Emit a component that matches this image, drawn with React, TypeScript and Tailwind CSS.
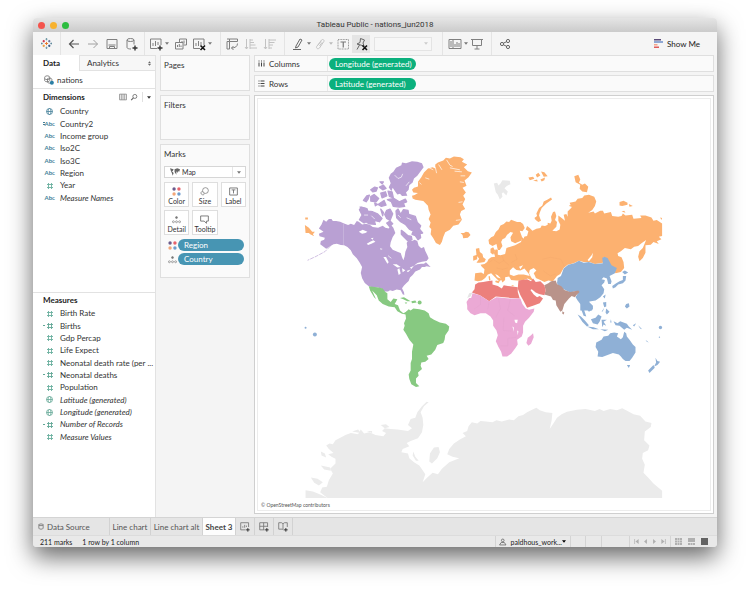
import React from "react";

type IconProps = { children: React.ReactNode; className?: string };

function Icon({ children, className = "h-[14px] w-[14px]" }: IconProps) {
  return (
    <svg viewBox="0 0 14 14" fill="none" stroke="currentColor" strokeWidth="1" className={className} aria-hidden="true">
      {children}
    </svg>
  );
}

function Tool({ label, children, className = "text-[#808080]" }: { label: string; children: React.ReactNode; className?: string }) {
  return (
    <button type="button" aria-label={label} className={`flex h-[18px] w-[18px] shrink-0 items-center justify-center ${className}`}>
      <Icon>{children}</Icon>
    </button>
  );
}

function Caret({ className = "text-[#777]" }: { className?: string }) {
  return (
    <svg viewBox="0 0 6 4" className={`h-[3px] w-[4px] shrink-0 ${className}`} aria-hidden="true">
      <path d="M0 0H6L3 4Z" fill="currentColor" />
    </svg>
  );
}

function Sep() {
  return <span className="h-full w-px shrink-0 bg-[#e4e4e4]" />;
}

const plus = <path d="M11 8.5V13.5M8.5 11H13.5" stroke="#333" strokeWidth="1.4" />;
const cross = <path d="M8.5 8.5L13 13M13 8.5L8.5 13" stroke="#111" strokeWidth="1.6" />;

function TableauLogo() {
  return (
    <svg viewBox="0 0 14 14" className="h-[11px] w-[11px]" fill="none" strokeWidth="1.2" aria-hidden="true">
      <path d="M7 5V9M5 7H9" stroke="#e8762c" />
      <path d="M3.5 2.5V5.5M2 4H5" stroke="#c72037" />
      <path d="M10.5 2.5V5.5M9 4H12" stroke="#5b6591" />
      <path d="M3.5 8.5V11.5M2 10H5" stroke="#eb912c" />
      <path d="M10.5 8.5V11.5M9 10H12" stroke="#1f457e" />
      <path d="M7 0V3M5.7 1.5H8.3" stroke="#7099a6" />
      <path d="M7 11V14M5.7 12.5H8.3" stroke="#7099a6" />
      <path d="M1 5.8V8.2M0 7H2M13 5.8V8.2M12 7H14" stroke="#5b879b" />
    </svg>
  );
}

function Toolbar() {
  return (
    <div className="flex h-[23px] shrink-0 items-center bg-[#f5f5f5]" role="toolbar" aria-label="Main toolbar">
      <button type="button" aria-label="Start page" className="flex w-[27px] shrink-0 items-center justify-center"><TableauLogo /></button>
      <Sep />
      <div className="ml-1 mr-1 flex gap-px">
        <Tool label="Undo" className="text-[#555]"><path d="M12 7H2.5M6.5 3L2.5 7L6.5 11" strokeWidth="1.2" /></Tool>
        <Tool label="Redo" className="text-[#a0a0a0]"><path d="M2 7H11.5M7.5 3L11.5 7L7.5 11" /></Tool>
        <Tool label="Save"><path d="M2 2.500H12V11.500H2ZM4.500 11.500V9.500H9.500V11.500M3.500 8H10.500" /></Tool>
        <Tool label="New data source">
          <ellipse cx="6.500" cy="3" rx="3.500" ry="1.500" />
          <path d="M3 3V10.500C3 11.500 5 12 7 12M10 3V7.500" />{plus}
        </Tool>
      </div>
      <Sep />
      <div className="ml-[2px] mr-1 flex items-center">
        <Tool label="New worksheet"><path d="M8 11.500H1.500V2H12V8M4 9V6M6.500 9V4M9 8V5" />{plus}</Tool>
        <Caret />
        <span className="w-[3px]" />
        <Tool label="Duplicate sheet"><path d="M5.500 5.500V2H12.500V8H9.500M1.500 5.500H9V12H1.500ZM3.500 10V8M5.300 10V7M7 10V8.500M8 4V5M10 3.500V6.500" /></Tool>
        <Tool label="Clear sheet"><path d="M8 11.500H1.500V2H12V8M4 9V6M6.500 9V4M9 8V5" />{cross}</Tool>
        <Caret />
        <span className="w-[4px]" />
      </div>
      <Sep />
      <div className="ml-[2px] mr-1 flex gap-px">
        <Tool label="Swap rows and columns"><path d="M4.500 2H12.500V4.500H4.500ZM2 4.500H4.500V12H2ZM2 2H4.500M12.500 6.500C12.500 9.500 10 11 6.500 11M8.500 9L6.500 11L8.500 13" /></Tool>
        <Tool label="Sort ascending" className="text-[#c2c2c2]"><path d="M2.500 2V12M1 10L2.500 12L4 10M6 3H9M6 5.500H10M6 8H11.500M6 11H13M6 2V12" /></Tool>
        <Tool label="Sort descending" className="text-[#c2c2c2]"><path d="M2.500 2V12M1 10L2.500 12L4 10M6 3H13M6 5.500H11.500M6 8H10M6 11H9M6 2V12" /></Tool>
      </div>
      <span className="w-px" />
      <Sep />
      <div className="ml-1 flex items-center">
        <Tool label="Highlight" className="text-[#666]"><path d="M5 9L9 2L11 3L7 10L4.500 11ZM2 12.500H10" /></Tool>
        <Caret />
        <Tool label="Group members" className="text-[#c4c4c4]"><path d="M5 8L8.500 3C10 1.500 12 3.500 10.500 5L6.500 11C4.500 13 2.500 10.500 4 9L8 4.500M6.500 9L9 5.500" /></Tool>
        <Caret className="text-[#bbb]" />
        <span className="w-px" />
        <Tool label="Show mark labels" className="text-[#999]"><path d="M2 2.500H12.500V12H2Z" strokeDasharray="1 .6" /><path d="M4.500 5H10M7.250 5V10.500" stroke="#777" strokeWidth="1.2" /></Tool>
        <button type="button" aria-label="Fix axes" aria-pressed="true" className="flex h-[18px] w-[18px] items-center justify-center bg-[#e5e5e5] text-[#666]">
          <Icon><path d="M6.500 1.500L10.500 3L9 6L10 9L3 7L6 5.500ZM5.500 8L3 12.500" />{cross}</Icon>
        </button>
      </div>
      <select aria-label="Fit" disabled className="ml-1 h-[14px] w-[58px] appearance-none border border-[#e4e4e4] bg-[#f7f7f7]" />
      <span className="-ml-2 mr-[14px] flex"><Caret className="text-[#ccc]" /></span>
      <Sep />
      <div className="ml-[3px] mr-[5px] flex items-center">
        <Tool label="Show or hide cards"><path d="M1 2.500H13V11.500H1ZM5 2.500V11.500M2 5H4M2 7H4M2 9H4M7 10V7M9 10V5M11 10V6" /></Tool>
        <Caret />
        <Tool label="Presentation mode"><path d="M1 2.500H13M2.500 2.500V8.500H11.500V2.500M7 8.500V12M4.500 12H9.500" /></Tool>
      </div>
      <Sep />
      <div className="ml-1"><Tool label="Share" className="text-[#666]"><circle cx="4" cy="7" r="1.600" /><circle cx="10" cy="4" r="1.600" /><circle cx="10" cy="10" r="1.600" /><path d="M5.400 6.200L8.600 4.700M5.400 7.800L8.600 9.300" /></Tool></div>
      <span className="flex-1" />
      <button type="button" className="mr-[17px] flex items-center gap-[4px] text-[#222]">
        <svg viewBox="0 0 9 9" className="h-[9px] w-[9px]" aria-hidden="true">
          <path d="M0 0H7V1.500H0Z" fill="#5a4a78" /><path d="M0 2H9V4H0Z" fill="#8fa8d4" /><path d="M0 5H3.500V6.500H0Z" fill="#f4a58c" /><path d="M0 7.500H5V9H0Z" fill="#e05a5a" />
        </svg>
        Show Me
      </button>
    </div>
  );
}

type Kind = "globe" | "abc" | "=abc" | "num" | "=num";
type Field = { name: string; kind: Kind; italic?: boolean };

const dimensions: Field[] = [
  { name: "Country", kind: "globe" },
  { name: "Country2", kind: "=abc" },
  { name: "Income group", kind: "abc" },
  { name: "Iso2C", kind: "abc" },
  { name: "Iso3C", kind: "abc" },
  { name: "Region", kind: "abc" },
  { name: "Year", kind: "num" },
  { name: "Measure Names", kind: "abc", italic: true },
];

const measures: Field[] = [
  { name: "Birth Rate", kind: "num" },
  { name: "Births", kind: "=num" },
  { name: "Gdp Percap", kind: "num" },
  { name: "Life Expect", kind: "num" },
  { name: "Neonatal death rate (per ...", kind: "num" },
  { name: "Neonatal deaths", kind: "=num" },
  { name: "Population", kind: "num" },
  { name: "Latitude (generated)", kind: "globe", italic: true },
  { name: "Longitude (generated)", kind: "globe", italic: true },
  { name: "Number of Records", kind: "=num", italic: true },
  { name: "Measure Values", kind: "num", italic: true },
];

function FieldIcon({ kind }: { kind: Kind }) {
  if (kind === "abc" || kind === "=abc") {
    return (
      <span className="flex items-center text-[6px] font-bold leading-none">
        {kind === "=abc" && <svg viewBox="0 0 2 3" className="h-[3px] w-[2px]" aria-hidden="true"><path d="M0 0H2V1H0ZM0 2H2V3H0Z" fill="currentColor" /></svg>}
        Abc
      </span>
    );
  }
  if (kind === "globe") {
    return (
      <Icon className="mr-[2px] h-[7px] w-[7px]">
        <circle cx="7" cy="7" r="6" strokeWidth="1.6" /><ellipse cx="7" cy="7" rx="2.800" ry="6" strokeWidth="1.400" /><path d="M1 7H13" strokeWidth="1.600" />
      </Icon>
    );
  }
  return (
    <svg viewBox="0 0 10 7" className="mr-[2px] h-[7px] w-[10px]" fill="none" stroke="currentColor" aria-hidden="true">
      {kind === "=num" && <path d="M0 3.500H2" />}
      <path d="M5.500 1V7M8.500 1V7M4 2.500H10M4 5.500H10" strokeWidth=".9" />
    </svg>
  );
}

function FieldList({ fields, className, tone }: { fields: Field[]; className: string; tone: string }) {
  return (
    <ul className={`flex flex-col ${className}`}>
      {fields.map((f) => (
        <li key={f.name} className="flex min-h-0 flex-1 items-center">
          <span className={`flex w-[22px] shrink-0 justify-end ${f.kind === "num" ? "text-[#6bb09f]" : tone}`}><FieldIcon kind={f.kind} /></span>
          <span className={`ml-[5px] whitespace-nowrap leading-none ${f.italic ? "italic" : ""}`}>{f.name}</span>
        </li>
      ))}
    </ul>
  );
}

function DataPane() {
  return (
    <aside className="flex w-[123px] shrink-0 flex-col border-r border-[#e2e2e2] bg-white">
      <div className="flex h-[16px] shrink-0" role="tablist">
        <button type="button" role="tab" aria-selected="true" className="w-[46px] pl-[10px] text-left font-bold text-[#222]">Data</button>
        <button type="button" role="tab" aria-selected="false" className="flex flex-1 items-center justify-between border-b border-l border-t border-[#e2e2e2] bg-[#f7f7f7] pl-[7px] pr-1">
          Analytics
          <svg viewBox="0 0 4 6" className="h-[5px] w-[3px]" aria-hidden="true"><path d="M0 2.500L2 0L4 2.500ZM0 3.500L2 6L4 3.500Z" fill="#666" /></svg>
        </button>
      </div>
      <button type="button" className="flex h-[18px] shrink-0 items-center gap-[3px] border-b border-[#e2e2e2] pl-[11px]">
        <Icon className="h-[10px] w-[10px] text-[#777]">
          <path d="M1 3C1 .5 8 .5 8 3V8C8 10 1 10 1 8ZM1 5C2 7 7 7 8 5M5 5V10C5 12 11 12 11 10V6C11 4 6 4 5 5" strokeWidth="1.200" />
          <circle cx="11" cy="11" r="2.800" fill="#2a7fa5" stroke="none" />
        </Icon>
        nations
      </button>
      <div className="flex h-[16px] shrink-0 items-center pl-[10px] pr-1">
        <h2 className="flex-1 font-bold text-[#222]">Dimensions</h2>
        <button type="button" aria-label="View data" className="mr-[3px] text-[#888]"><Icon className="h-[8px] w-[8px]"><path d="M1 2H13V12H1ZM4 2V12M7 2V12M10 2V12" strokeWidth="1.400" /></Icon></button>
        <button type="button" aria-label="Find field" className="mr-[4px] text-[#666]"><Icon className="h-[8px] w-[8px]"><circle cx="8.500" cy="6" r="3.500" strokeWidth="1.400" /><path d="M6 8.500L2 12.500" strokeWidth="2" /></Icon></button>
        <span className="mr-[4px] h-[10px] w-px bg-[#e0e0e0]" />
        <button type="button" aria-label="Dimension options"><Caret className="text-[#333]" /></button>
      </div>
      <FieldList fields={dimensions} tone="text-[#437f98]" className="h-[99px] shrink-0" />
      <div className="mt-[88px] flex h-[15px] shrink-0 items-center border-t border-[#e2e2e2] pl-[10px]">
        <h2 className="font-bold text-[#222]">Measures</h2>
      </div>
      <FieldList fields={measures} tone="text-[#62a796]" className="h-[136px] shrink-0" />
    </aside>
  );
}

function ColorDots() {
  return (
    <svg viewBox="0 0 10 10" className="h-[9px] w-[9px]" aria-hidden="true">
      <circle cx="2.300" cy="2.300" r="1.900" fill="#6b5b8c" /><circle cx="7.700" cy="2.300" r="1.900" fill="#e8636b" /><circle cx="2.300" cy="7.700" r="1.900" fill="#f2a679" /><circle cx="7.700" cy="7.700" r="1.900" fill="#6f9ccd" />
    </svg>
  );
}

function DetailDots() {
  return (
    <Icon className="h-[9px] w-[9px] text-[#777]">
      <circle cx="7" cy="4" r="1.500" fill="currentColor" /><circle cx="2.200" cy="10.500" r="1.500" /><circle cx="7" cy="10.500" r="1.500" /><circle cx="11.800" cy="10.500" r="1.500" />
    </Icon>
  );
}

function MarkButton({ label, children }: { label: string; children: React.ReactNode }) {
  return (
    <button type="button" className="flex h-[25px] flex-col items-center justify-between border border-[#dedede] bg-white pb-px pt-[4px] text-[7px] text-[#333]">
      {children}
      <span className="leading-[8px]">{label}</span>
    </button>
  );
}

function Cards() {
  return (
    <div className="flex w-[90px] shrink-0 flex-col gap-[4px]">
      <section className="h-[36px] border border-[#dfdfdf] bg-[#fafafa] px-[3px] py-[4px]"><h2 className="leading-[10px]">Pages</h2></section>
      <section className="h-[45px] border border-[#dfdfdf] bg-[#fafafa] px-[3px] py-[4px]"><h2 className="leading-[10px]">Filters</h2></section>
      <section className="h-[134px] border border-[#dfdfdf] bg-[#fafafa] px-[3px] py-[4px]">
        <h2 className="leading-[10px]">Marks</h2>
        <div className="mt-[7px] flex h-[12px] items-center border border-[#d6d6d6] bg-white pl-[5px] pr-[4px]">
          <svg viewBox="0 0 11 8" className="h-[8px] w-[10px]" fill="#666" aria-hidden="true"><path d="M0 0L4 1L3 3L2 3L4 5L3 8L2 5L1 3ZM5 1L8 0L11 1L10 4L9 3L8 5L7 3L7 7L5 4Z" /></svg>
          <select aria-label="Mark type" className="h-[10px] min-w-0 flex-1 appearance-none pl-[2px] text-[7px] leading-[10px]"><option>Map</option></select>
          <span className="mr-[4px] h-full w-px bg-[#e6e6e6]" />
          <Caret />
        </div>
        <div className="mt-[4px] grid grid-cols-3 gap-[3px]">
          <MarkButton label="Color"><ColorDots /></MarkButton>
          <MarkButton label="Size"><Icon className="h-[9px] w-[9px] text-[#666]"><circle cx="8.500" cy="5.500" r="4.500" /><path d="M4 7C1.500 7 1 9 2 11C4 13 7 12.500 6.500 10" /></Icon></MarkButton>
          <MarkButton label="Label"><Icon className="h-[9px] w-[9px] text-[#666]"><path d="M1 1.500H13V12.500H1ZM4 4.500H10M7 4.500V10" strokeWidth="1.300" /></Icon></MarkButton>
          <MarkButton label="Detail"><DetailDots /></MarkButton>
          <MarkButton label="Tooltip"><Icon className="h-[9px] w-[9px] text-[#666]"><path d="M1 1.500H13V9.500H10V13L6.500 9.500H1Z" strokeWidth="1.300" /></Icon></MarkButton>
        </div>
        <ul className="mt-[4px] flex flex-col gap-[2px] pl-[4px] pr-[2px]">
          <li className="flex items-center gap-px"><ColorDots /><button type="button" className="h-[12px] flex-1 rounded-full bg-[#4795b3] pl-[6px] text-left text-white">Region</button></li>
          <li className="flex items-center gap-px"><DetailDots /><button type="button" className="h-[12px] flex-1 rounded-full bg-[#4795b3] pl-[6px] text-left text-white">Country</button></li>
        </ul>
      </section>
    </div>
  );
}

function Shelf({ name, pill, vertical }: { name: string; pill: string; vertical?: boolean }) {
  return (
    <section className="flex h-[17px] shrink-0 items-center border border-[#dfdfdf] bg-[#fafafa]">
      <div className="flex h-full w-[73px] items-center gap-[4px] border-r border-[#e8e8e8] pl-[3px]">
        <Icon className="h-[7px] w-[7px] text-[#444]">
          {vertical ? <path d="M2 1V3M2 5V13M7 1V3M7 5V13M12 1V3M12 5V13" strokeWidth="2" /> : <path d="M1 2H3M5 2H13M1 7H3M5 7H13M1 12H3M5 12H13" strokeWidth="2" />}
        </Icon>
        <h2>{name}</h2>
      </div>
      <button type="button" className="ml-px h-[12px] w-[87px] rounded-full bg-[#0bb07d] pl-[6px] text-left text-white">{pill}</button>
    </section>
  );
}

function WorldMap() {
  return (
    <svg viewBox="257 98 453 402" className="min-h-0 w-full flex-1" role="img" aria-label="World map coloured by region">
      <g transform="translate(300 390) scale(.33333)" fill="#ebebeb">
        <path d="M14 324V300L36 304L60 314L80 324Z" />
        <path d="M80 324L70 316L58 306L64 292L78 290L84 270L96 250L88 236L104 220L104 206L92 200L82 192L98 188L84 176L76 166L86 160L96 162L104 150L120 142L134 134L150 128L172 132L180 118L190 130L206 126L224 134L248 138L256 128L244 122L252 114L270 116L290 118L306 120L322 122L334 114L322 104L330 86L344 82L350 66L364 48L378 34L384 36L370 48L360 66L366 82L368 104L364 126L352 144L330 152L318 158L326 168L306 176L302 186L322 190L326 204L340 216L356 226L366 240L374 252L366 276L380 262L396 248L412 252L424 236L446 216L476 204L456 200L440 192L446 176L460 160L478 148L496 138L486 128L500 122L504 108L514 96L530 100L540 92L556 94L576 96L588 90L604 94L626 88L640 90L654 78L668 74L680 66L692 60L708 52L718 60L736 66L756 68L754 90L748 116L760 98L770 82L784 72L800 64L830 58L856 56L884 62L898 56L910 62L930 56L950 60L966 54L982 62L1000 72L1020 76L1036 94L1054 98L1052 110L1034 124L1032 150L1048 166L1044 180L1028 188L1026 206L1034 224L1030 248L1046 264L1060 280L1086 302V324Z" />
        <path d="M388 190L400 172L414 170L418 186L410 204L394 220L386 214ZM338 184L344 200L354 212L346 212L336 196ZM60 184L72 190L76 202L62 196ZM60 226L88 232L90 242L70 238ZM30 262L50 266L66 276L54 286L40 278Z" />
        <path d="M240 104L256 102L266 110L252 114ZM154 124L172 118L180 128ZM198 122L214 122L214 128Z" />
      </g>

      <g transform="translate(300 145) scale(.33333)">
        <g fill="#b9a0d3">
          <path d="M68 222L76 228L84 220L92 220L96 226L106 226L118 228L130 233L142 238L150 234L160 238L168 226L174 228L184 236L196 234L208 238L216 244L232 246L246 240L254 246L264 248L270 236L278 246L284 262L276 274L270 290L268 302L276 312L290 318L300 322L304 334L308 344L312 332L314 318L320 304L318 292L326 278L334 286L342 282L350 286L354 300L362 308L370 304L374 316L380 328L384 338L378 346L364 348L350 352L340 360L350 356L362 354L370 354L376 350L390 364L378 362L372 364L364 364L358 372L344 378L336 388L328 396L324 406L316 414L310 420L304 428L310 440L311 448L306 446L300 434L288 432L276 436L268 434L262 438L252 438L244 430L232 426L218 426L204 422L192 412L184 398L180 382L184 364L176 350L168 338L156 326L150 314L140 304L130 299L120 298L108 294L98 296L88 302L76 309L66 302L58 296L60 286L70 282L72 276L56 272L54 264L68 258L54 248L62 236Z" />
          <path d="M88 302L72 318L46 332L20 344" fill="none" stroke="#b9a0d3" strokeWidth="2" strokeDasharray="12 3" />
          <path d="M264 96L270 84L278 78L286 66L302 58L304 50L316 52L334 46L350 48L364 52L369 64L360 76L350 90L340 98L336 110L326 118L324 132L316 140L320 150L304 151L298 144L290 146L284 138L276 126L272 136L264 124L270 112Z" />
          <g stroke="#b9a0d3" strokeWidth="4" strokeLinejoin="round">
            <path d="M286 196L292 190L300 206L308 192L322 194L324 206L344 212L350 230L360 240L356 250L366 262L358 264L360 276L352 282L344 270L334 266L338 256L326 250L314 236L300 228L288 216Z" />
            <path d="M176 192L182 184L196 188L202 196L216 198L230 204L244 218L236 228L220 224L224 236L204 234L196 228L190 232L176 222L184 208Z" />
            <path d="M188 164L198 150L206 148L202 160L196 168ZM210 132L222 124L230 126L226 136L216 138ZM210 152L220 146L234 158L226 168L210 166ZM236 124L248 118L256 128L246 132ZM240 142L254 138L258 150L244 156ZM262 136L274 138L278 156L266 152ZM260 162L280 158L296 168L314 160L318 168L308 172L312 182L296 184L278 182L272 168ZM232 176L250 164L256 178L242 182ZM178 184L200 190L190 196ZM258 194L268 190L276 204L268 224L258 218L252 206ZM240 190L248 200L246 210ZM302 254L310 260L322 270L332 272L334 282L320 284L310 274L302 266ZM222 172L230 176L224 180ZM238 108L248 108L244 114ZM258 232L268 226L276 234L266 242Z" />
          </g>
        </g>
        <g fill="white">
          <path d="M174 258L186 252L200 258L194 262L184 264ZM198 294L208 288L218 284L224 288L212 294L202 298ZM248 334L256 334L264 350L260 354ZM276 356L288 356L300 364L290 366ZM290 372L296 368L300 384L294 388ZM304 368L314 374L306 380ZM210 278L218 276L216 282ZM238 308L246 310L240 312ZM328 366L340 360L332 370ZM318 376L330 372L322 380Z" />
          <path d="M282 88L292 98L302 94L306 84M316 120L326 108M190 208L202 208M212 210L222 220M292 208L300 216M318 216L332 222M262 330L272 338" fill="none" stroke="white" strokeWidth="2" />
          <path d="M128 234V298" fill="none" stroke="white" strokeWidth="1" opacity=".6" />
        </g>
        <g fill="#fcb170">
          <path d="M382 68L396 64L404 68L404 56L412 50L428 44L436 36L448 38L460 32L480 34L490 40L484 48L500 56L490 64L502 76L514 80L504 94L492 104L498 120L486 126L496 140L488 150L494 160L486 176L494 190L482 196L478 206L484 222L474 236L458 240L448 252L434 260L428 274L424 288L418 298L406 292L398 278L390 266L392 250L386 244L390 230L384 220L390 206L384 192L382 180L368 166L344 162L336 158L334 150L342 148L352 142L338 140L334 132L340 126L352 122L352 108L362 94L370 80Z" />
          <path d="M12 238L24 246L34 258L42 258L36 266L40 272L28 266L24 262L14 262ZM13 215H21V221H13Z" />
          <path d="M480 262L490 262L496 258L504 260L510 268L502 276L488 278L486 268Z" />
        </g>
        <path d="M382 64L398 72M404 64L408 82M414 56L424 72M438 42L448 58L456 62M448 66L478 72M462 76L484 78M356 110L362 116M386 100L374 96M480 90L494 90M474 170L486 168M466 224L480 222M478 108L490 110" fill="none" stroke="white" strokeWidth="2" />
      </g>

      <g transform="translate(460 160) scale(.33333)">
        <g fill="#fcb170">
          <path d="M42 360L44 338L62 336L70 340L72 326L64 318L60 312L72 310L80 304L84 296L92 290L104 288L100 276L106 266L112 268L112 282L120 284L134 280L138 262L150 258L164 254L182 244L184 230L200 226L204 212L196 206L200 196L208 202L216 210L228 204L240 202L244 194L254 196L262 192L262 186L270 188L274 180L272 168L278 154L284 152L288 166L284 178L290 184L288 198L276 210L288 212L298 206L300 192L294 180L294 164L304 172L314 180L310 162L318 160L322 168L322 152L334 140L328 126L346 122L352 114L366 112L372 104L386 102L402 108L408 122L404 136L396 148L384 156L400 152L404 158L420 150L428 150L432 158L452 154L456 166L474 168L484 166L488 158L496 164L516 162L520 174L544 172L540 164L556 164L574 170L580 180L590 178L606 188L606 226L596 228L604 236L590 242L596 250L580 244L572 252L556 254L556 276L548 292L538 302L534 288L538 272L548 262L558 238L544 248L534 256L522 258L512 266L494 262L482 272L472 278L474 286L484 290L490 304L492 322L482 334L466 338L454 320L440 296L430 290L428 306L404 310L388 304L370 304L356 300L340 308L322 312L310 322L300 340L290 346L278 362L264 360L252 364L240 358L226 352L214 360L202 354L186 360L168 360L152 358L146 348L134 350L134 358L126 366L120 352L112 344L104 340L110 350L126 356L116 362L100 346L92 338L82 342L74 352L64 360L52 362Z" />
          <path d="M86 250L84 238L92 230L100 226L106 214L114 206L120 194L130 190L138 182L146 184L152 177L160 180L170 184L180 184L188 190L193 202L186 212L178 210L186 232L182 240L164 248L152 242L150 230L158 216L150 214L140 222L134 232L126 236L122 244L126 256L118 268L112 268L108 250L96 256Z" />
          <path d="M222 172L230 166L228 158L236 142L246 134L250 122L262 116L272 110L275 116L258 128L244 142L238 156L236 164L242 180L234 184L226 178Z" />
          <path d="M342 46L354 42L360 56L356 66L366 72L374 68L384 78L380 94L366 92L358 84L360 72L346 64ZM478 124L490 120L502 126L502 132L486 136L478 134ZM506 130L518 136L508 138ZM484 152L492 150L496 156ZM204 50L218 48L222 54L208 58ZM226 42L234 36L240 44L230 50ZM242 32L252 34L262 46L250 48ZM240 56L254 50L252 58L244 62ZM218 60L230 56L232 62ZM600 170L606 172L604 178ZM326 134L336 132L330 138Z" />
          <path d="M46 264L56 262L58 274L66 280L68 290L76 296L72 304L58 306L48 306L56 294L48 284ZM38 286L50 282L50 296L38 300ZM84 348L88 346L90 358L86 360ZM106 360L118 362L114 368L104 364ZM90 264L98 260L104 270L98 282L90 276ZM152 374L160 374L158 378Z" />
        </g>
        <path d="M148 330L158 320L168 328L180 330L192 324L204 338L208 346L190 342L174 342L160 346L148 342ZM208 328L220 322L228 330L220 338L224 346L230 360L220 360L212 350L206 338ZM382 298L394 284L398 276L396 290L386 302ZM176 318L188 314L180 326ZM184 228L192 226L190 234Z" fill="white" />
        <path d="M86 306L98 296L116 308L130 300L146 314M124 284L130 300M164 280L170 296L152 306M246 296L270 290L302 296L312 318M108 322L126 326L142 322M248 330L270 346L286 340" fill="none" stroke="#e9a066" strokeWidth="1" opacity=".6" />
        <path d="M100 68L110 66L114 74L120 68L126 58L148 60L150 70L138 76L132 82L142 92L138 104L128 94L124 98L126 108L118 116L112 102L106 94Z" fill="#e9e9e9" />
        <g fill="#8fb0d6">
          <path d="M292 352L302 346L310 324L324 312L342 308L356 300L370 306L386 304L404 310L428 308L426 292L432 288L442 292L454 314L470 322L464 338L448 346L454 362L452 370L444 370L440 354L430 350L424 356L434 358L432 366L424 374L432 386L430 398L420 410L406 420L392 422L380 424L390 438L396 450H360L360 430L352 420L346 410L356 392L344 392L330 396L310 386L296 376L290 368Z" />
          <path d="M456 376L468 368L478 362L488 358L488 346L498 346L496 360L488 368L474 372L466 380L458 384ZM486 334L494 330L504 336L494 342ZM428 408L436 402L434 414Z" />
        </g>
        <path d="M252 374L264 368L272 362L286 360L290 370L304 378L312 388L330 394L354 390L358 394L348 404L344 410L334 406L326 414L312 430L306 450L300 454L288 434L286 420L278 418L272 408L252 402L256 390Z" fill="#b9938a" />
        <path d="M174 360L200 356L212 362L218 354L226 364L240 362L252 374L256 390L252 404L236 400L226 396L214 386L210 388L220 402L230 410L238 406L248 414L238 428L222 434L200 442L190 422L180 404L172 384Z" fill="#ec807c" />
      </g>

      <g transform="translate(390 280) scale(.33333)">
        <path d="M244 36L252 26L254 12L264 6L278 4L290 2L306 0L306 12L322 16L334 24L340 14L352 16L366 18L382 20L382 34L388 54L360 52L316 48L296 62L268 44L250 38Z" fill="#ec807c" />
        <path d="M230 52L236 38L246 36L240 48Z" fill="#e5e5e5" />
        <path d="M230 76L228 64L236 52L242 52L246 38L268 44L296 62L318 50L358 54L390 54L396 70L406 84L416 88L432 84L430 94L416 112L404 124L398 136L398 156L394 168L380 178L382 192L374 204L362 220L350 228L336 228L332 214L324 200L316 182L322 164L318 150L308 136L308 120L300 108L286 98L270 98L252 104L240 98L230 86ZM412 172L422 164L428 158L430 170L422 190L414 196L408 188Z" fill="#eba9d5" />
        <path d="M372 118L382 118L380 128L374 126ZM366 138L370 140L370 154ZM380 150L384 152L382 164Z" fill="white" />
        <path d="M270 44V72L250 86M296 62L292 86M324 54L330 84L316 110M360 54L352 90L372 106M340 112L338 150L364 152M330 196H352V174L378 170" fill="none" stroke="#d89cc4" strokeWidth="1" opacity=".55" />
        <g fill="#87c981">
          <path d="M44 96L54 86L60 90L68 84L86 86L102 90L114 98L118 110L130 118L148 126L166 130L176 138L174 150L164 164L162 178L158 188L140 194L134 208L122 222L108 226L114 236L104 244L92 246L90 256L94 266L82 276L84 286L76 294L76 308L86 318L76 320L62 312L56 296L54 282L60 270L60 248L64 236L64 214L68 192L56 178L46 160L38 148L42 136L40 128L46 114Z" />
          <path d="M-66 17L-36 21L-24 24L-16 34L-10 38L-10 56L0 64L8 54L20 56L12 70L22 74L28 90L38 98L50 92L46 102L34 100L20 92L12 80L-6 78L-24 70L-36 60L-42 44L-56 30L-44 56L-50 50L-62 30Z" />
          <path d="M28 52L40 50L50 56L60 62L50 62L38 56ZM62 62L74 60L78 66L64 68ZM42 66L50 66L46 70Z" /><circle cx="87" cy="66" r="6" />
        </g>
        <g fill="#8fb0d6">
          <path d="M618 186L634 178L640 168L654 166L660 158L672 156L684 158L680 168L692 176L698 170L702 154L708 158L710 168L718 178L728 192L736 200L736 216L726 232L718 242L706 242L698 236L692 228L686 222L668 218L652 224L636 230L622 228L624 214L616 200Z" />
          <path d="M710 254L720 254L716 263ZM796 232L802 242L810 244L802 254L792 258L798 246ZM790 254L794 262L784 272L778 278L774 270ZM670 122L682 128L690 122L710 130L716 138L726 148L710 142L702 148L688 136L676 134ZM602 116L616 112L624 102L634 108L628 124L622 132L608 128ZM562 102L572 108L584 120L596 134L590 138L576 124ZM590 138L610 140L626 146L608 146ZM634 118L650 118L640 124L648 136L640 132L636 140ZM630 146L654 148L644 152ZM638 66L648 64L648 78L642 80ZM648 84L658 94L650 102L646 96ZM642 82L638 92L634 94ZM728 134L738 128L732 138ZM744 134L756 146L750 144ZM766 178L776 186L770 184ZM708 70L716 68L718 78L710 84L704 78ZM662 116L664 126L660 126Z" />
          <path d="M556 46L570 60L572 74L574 90L580 106L588 108L582 90L582 78L588 84L596 94L608 86L608 76L598 66L596 58L606 60V54H570Z" />
          <circle cx="811" cy="141" r="5" /><circle cx="-228" cy="162" r="6" /><circle cx="-256" cy="142" r="3" /><circle cx="808" cy="170" r="2" />
        </g>
        <path d="M516 92L522 96L520 102L516 100Z" fill="#b9938a" />
      </g>
    </svg>
  );
}

function SheetTab({ label, className }: { label: string; className: string }) {
  return <button type="button" className={`h-full whitespace-nowrap border-r border-[#d2d2d2] ${className}`}>{label}</button>;
}

function NewTab({ label, children }: { label: string; children: React.ReactNode }) {
  return (
    <button type="button" aria-label={label} className="flex h-full w-[19px] items-center justify-center border-r border-[#d2d2d2] text-[#777]">
      <Icon className="h-[10px] w-[10px]">{children}{plus}</Icon>
    </button>
  );
}

function Footer() {
  return (
    <footer className="shrink-0 bg-[#e5e5e5]">
      <div className="flex h-[18px] items-center border-t border-[#d4d4d4] text-[#555]">
        <button type="button" className="flex h-full w-[77px] items-center gap-[3px] border-r border-[#d2d2d2] pl-[5px]">
          <Icon className="h-[7px] w-[6px]"><ellipse cx="7" cy="3" rx="5" ry="2" strokeWidth="1.500" /><path d="M2 3V11C2 14 12 14 12 11V3" strokeWidth="1.500" /></Icon>
          Data Source
        </button>
        <SheetTab label="Line chart" className="w-[41px]" />
        <SheetTab label="Line chart alt" className="w-[52px]" />
        <SheetTab label="Sheet 3" className="w-[33px] bg-[#fdfdfd] font-bold text-[#444]" />
        <NewTab label="New worksheet"><path d="M8 11H1V1H12V7M4 8V6M6.500 8V4M9 7V5" strokeWidth="1.200" /></NewTab>
        <NewTab label="New dashboard"><path d="M8 11H1V1H12V7M6.500 1V11M1 6H12" strokeWidth="1.200" /></NewTab>
        <NewTab label="New story"><path d="M8 11H7L6 10H1V1H5L7 2.500L9 1H13V7M7 2.500V10" strokeWidth="1.200" /></NewTab>
      </div>
      <div className="flex h-[12px] items-center border-t border-[#dcdcdc] bg-[#e9e9e9] pl-[7px] text-[7px] text-[#222]">
        <span className="mr-[10px]">211 marks</span>
        <span className="flex-1">1 row by 1 column</span>
        <button type="button" className="flex h-full w-[76px] items-center border-x border-[#d4d4d4] pl-[3px]">
          <Icon className="mr-[4px] h-[8px] w-[8px] text-[#666]"><circle cx="7" cy="4" r="2.500" strokeWidth="1.500" /><path d="M4 8H10L13 12.500H1Z" strokeWidth="1.500" /></Icon>
          <span className="flex-1 text-left">paldhous_work...</span>
          <span className="mr-[4px]"><Caret className="text-black" /></span>
        </button>
        <span className="h-full w-[15px] border-r border-[#d4d4d4]" />
        <span className="h-full w-[16px] border-r border-[#d4d4d4]" />
        <span className="h-full w-[28px] border-r border-[#d4d4d4]" />
        <div className="flex h-full w-[41px] items-center justify-between border-r border-[#d4d4d4] px-[4px] text-[#b0b0b0]">
          <button type="button" aria-label="First sheet"><Icon className="h-[5px] w-[5px]"><path d="M1 0V14H3V0ZM13 0V14L4 7Z" fill="currentColor" stroke="none" /></Icon></button>
          <button type="button" aria-label="Previous sheet"><Icon className="h-[5px] w-[5px]"><path d="M11 0V14L3 7Z" fill="currentColor" stroke="none" /></Icon></button>
          <button type="button" aria-label="Next sheet"><Icon className="h-[5px] w-[5px]"><path d="M3 0V14L11 7Z" fill="currentColor" stroke="none" /></Icon></button>
          <button type="button" aria-label="Last sheet"><Icon className="h-[5px] w-[5px]"><path d="M13 0V14H11V0ZM1 0V14L10 7Z" fill="currentColor" stroke="none" /></Icon></button>
        </div>
        <div className="flex items-center gap-[6px] pl-[4px] pr-[9px]">
          <button type="button" aria-label="Sheet sorter"><Icon className="h-[7px] w-[7px] text-[#b0b0b0]"><path d="M0 2H4M5 2H9M10 2H14M0 7H4M5 7H9M10 7H14M0 12H4M5 12H9M10 12H14" strokeWidth="3.600" /></Icon></button>
          <button type="button" aria-label="Filmstrip"><Icon className="h-[7px] w-[7px] text-[#b0b0b0]"><path d="M0 0H14V8H0ZM0 10H4V14H0ZM5 10H9V14H5ZM10 10H14V14H10Z" fill="currentColor" stroke="none" /></Icon></button>
          <button type="button" aria-label="Show tabs" className="h-[7px] w-[7px] bg-[#636363]" />
        </div>
      </div>
    </footer>
  );
}

export default function App() {
  return (
    <div className="flex min-h-screen bg-white px-[33px] pb-[47px] pt-[18px] font-[Lato,sans-serif] text-[8px] leading-[12px] text-[#333]">
      <main className="flex min-w-0 flex-1 flex-col overflow-hidden rounded-[4px] bg-[#f4f4f4] shadow-[0_10px_24px_rgba(0,0,0,0.6)]">
        <header className="relative flex h-[14px] shrink-0 items-center justify-center bg-linear-to-b from-[#e5e5e5] to-[#cbcbcb]">
          <div className="absolute left-[5px] flex gap-[5px]">
            <button type="button" aria-label="Close" className="h-[7px] w-[7px] rounded-full bg-[#f4544d]" />
            <button type="button" aria-label="Minimize" className="h-[7px] w-[7px] rounded-full bg-[#f7b22f]" />
            <button type="button" aria-label="Zoom" className="h-[7px] w-[7px] rounded-full bg-[#2dbd40]" />
          </div>
          <h1 className="font-[Roboto,sans-serif]">Tableau Public - nations_jun2018</h1>
        </header>
        <Toolbar />
        <div className="flex min-h-0 flex-1">
          <DataPane />
          <div className="flex min-w-0 flex-1 gap-[4px] pl-[4px] pr-[3px]">
            <Cards />
            <div className="flex min-w-0 flex-1 flex-col gap-[3px]">
              <Shelf name="Columns" pill="Longitude (generated)" vertical />
              <Shelf name="Rows" pill="Latitude (generated)" />
              <section className="mb-[3px] flex min-h-0 flex-1 border border-[#cfcfcf] bg-white p-[2px]">
                <div className="flex min-h-0 flex-1 flex-col border border-[#ececec]">
                  <WorldMap />
                  <p className="px-[3px] text-[5px] leading-[10px] text-[#555]">© OpenStreetMap contributors</p>
                </div>
              </section>
            </div>
          </div>
        </div>
        <Footer />
      </main>
    </div>
  );
}
